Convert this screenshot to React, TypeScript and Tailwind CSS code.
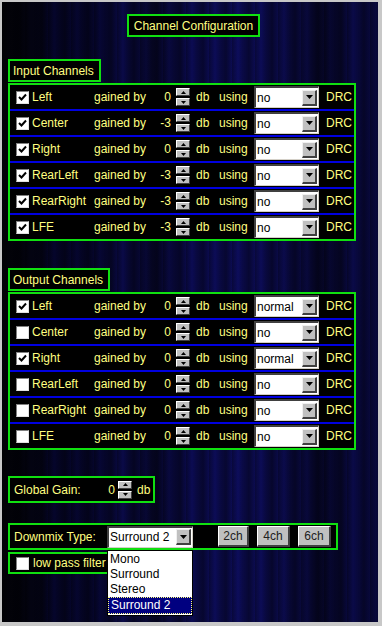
import React from 'react'

type Row = { name: string; on: boolean; gain: string; mode: string }

const INPUTS: Row[] = [
  { name: 'Left', on: true, gain: '0', mode: 'no' },
  { name: 'Center', on: true, gain: '-3', mode: 'no' },
  { name: 'Right', on: true, gain: '0', mode: 'no' },
  { name: 'RearLeft', on: true, gain: '-3', mode: 'no' },
  { name: 'RearRight', on: true, gain: '-3', mode: 'no' },
  { name: 'LFE', on: true, gain: '-3', mode: 'no' },
]

const OUTPUTS: Row[] = [
  { name: 'Left', on: true, gain: '0', mode: 'normal' },
  { name: 'Center', on: false, gain: '0', mode: 'no' },
  { name: 'Right', on: true, gain: '0', mode: 'normal' },
  { name: 'RearLeft', on: false, gain: '0', mode: 'no' },
  { name: 'RearRight', on: false, gain: '0', mode: 'no' },
  { name: 'LFE', on: false, gain: '0', mode: 'no' },
]

function Check({ on }: { on: boolean }) {
  return (
    <div className="w-[13px] h-[13px] bg-white border-t border-l border-[#808080] border-r border-b border-r-[#e0e0e0] border-b-[#e0e0e0] flex items-center justify-center shrink-0">
      {on && (
        <svg width="9" height="9" viewBox="0 0 9 9">
          <path d="M1 4 L3.5 6.5 L8 1.5" fill="none" stroke="#000" strokeWidth="2" />
        </svg>
      )}
    </div>
  )
}

function Arrow() {
  return (
    <svg width="7" height="4" viewBox="0 0 7 4">
      <path d="M0 0 L7 0 L3.5 4 Z" fill="#000" />
    </svg>
  )
}

function SpinBtn({ up }: { up?: boolean }) {
  return (
    <div className="w-[14px] h-[8px] bg-[#c0c0c0] border-t border-l border-white border-r border-b border-r-[#404040] border-b-[#404040] flex items-center justify-center">
      <svg width="5" height="3" viewBox="0 0 5 3">
        <path d={up ? 'M0 3 L2.5 0 L5 3 Z' : 'M0 0 L5 0 L2.5 3 Z'} fill="#000" />
      </svg>
    </div>
  )
}

function Spinner() {
  return (
    <div className="flex flex-col gap-[2px] shrink-0">
      <SpinBtn up />
      <SpinBtn />
    </div>
  )
}

function Select({ value, width }: { value: string; width: string }) {
  return (
    <div className={`${width} h-[22px] bg-white border-t-2 border-l-2 border-[#404040] border-r border-b border-r-[#d4d0c8] border-b-[#d4d0c8] flex items-center justify-between shrink-0`}>
      <span className="pl-[1px] text-black text-[12px] leading-none whitespace-nowrap">{value}</span>
      <div className="w-[15px] h-[16px] mr-[1px] bg-[#c0c0c0] border-t border-l border-[#f0f0f0] border-r-2 border-b-2 border-r-[#404040] border-b-[#404040] flex items-center justify-center shrink-0">
        <Arrow />
      </div>
    </div>
  )
}

function ChannelTable({ rows }: { rows: Row[] }) {
  return (
    <div className="w-[348px] border-2 border-[#10e010] bg-black divide-y-2 divide-[#0000e0] mt-[1px]">
      {rows.map(r => (
        <div key={r.name} className="box-content h-[24px] flex items-center text-[12px] text-[#ffff80] whitespace-nowrap">
          <div className="ml-[6px]"><Check on={r.on} /></div>
          <span className="ml-[3px] w-[62px] shrink-0">{r.name}</span>
          <span className="w-[52px] shrink-0">gained by</span>
          <span className="w-[25px] shrink-0 text-right">{r.gain}</span>
          <div className="ml-[5px]"><Spinner /></div>
          <span className="ml-[6px] w-[23px] shrink-0">db</span>
          <span className="w-[35px] shrink-0">using</span>
          <Select value={r.mode} width="w-[65px]" />
          <span className="ml-[7px]">DRC</span>
        </div>
      ))}
    </div>
  )
}

function Label({ text, width }: { text: string; width: string }) {
  return (
    <div className={`${width} h-[23px] border-2 border-[#10e010] bg-black flex items-center pl-[3px] text-[12px] text-[#ffff80] whitespace-nowrap`}>
      {text}
    </div>
  )
}

function GrayBtn({ text, width }: { text: string; width: string }) {
  return (
    <div className={`${width} h-[21px] bg-[#c0c0c0] border-t border-l border-white border-r-2 border-b-2 border-r-[#404040] border-b-[#404040] flex items-center justify-center text-[12px] text-[#202020]`}>
      {text}
    </div>
  )
}

export default function App() {
  return (
    <div
      className="relative w-[382px] h-[626px] overflow-hidden border-t-2 border-l-2 border-r-4 border-b-4 border-[#c8c8c8] bg-[repeating-linear-gradient(90deg,rgba(0,0,0,0.35)_0px,rgba(0,0,0,0)_6px,rgba(0,0,0,0.25)_11px,rgba(0,0,0,0.45)_17px,rgba(0,0,0,0.1)_23px),linear-gradient(90deg,#020206_0%,#030312_8%,#05052c_14%,#060630_25%,#0a0a48_32%,#07072e_40%,#0b0b52_50%,#0d0d5c_65%,#0a0a46_78%,#06062a_86%,#0b0b4e_95%,#080838_100%)] pl-[6px] pt-[12px] flex flex-col items-start"
      style={{ fontFamily: '"Liberation Sans", Arial, sans-serif' }}
    >
      <div className="ml-[119px] w-[133px] h-[23px] border-2 border-[#10e010] bg-black flex items-center justify-center text-[12px] text-[#ffff80] whitespace-nowrap">
        Channel Configuration
      </div>

      <div className="mt-[22px]"><Label text="Input Channels" width="w-[93px]" /></div>
      <ChannelTable rows={INPUTS} />

      <div className="mt-[27px]"><Label text="Output Channels" width="w-[102px]" /></div>
      <ChannelTable rows={OUTPUTS} />

      <div className="mt-[26px] w-[147px] h-[27px] border-2 border-[#10e010] bg-black flex items-center text-[12px] text-[#ffff80] whitespace-nowrap">
        <span className="ml-[4px] w-[93px] shrink-0">Global Gain:</span>
        <span className="w-[8px] shrink-0 text-right">0</span>
        <div className="ml-[3px]"><Spinner /></div>
        <span className="ml-[5px]">db</span>
      </div>

      <div className="mt-[20px] w-[330px] h-[27px] border-2 border-[#10e010] bg-black flex items-center text-[12px] text-[#ffff80] whitespace-nowrap">
        <span className="ml-[4px] w-[93px] shrink-0">Downmix Type:</span>
        <Select value="Surround 2" width="w-[86px]" />
        <div className="ml-[25px] flex gap-[8px]">
          <GrayBtn text="2ch" width="w-[31px]" />
          <GrayBtn text="4ch" width="w-[33px]" />
          <GrayBtn text="6ch" width="w-[33px]" />
        </div>
      </div>

      <div className="mt-[2px] w-[130px] h-[22px] border-2 border-[#10e010] bg-black flex items-center text-[12px] text-[#ffff80] whitespace-nowrap">
        <div className="ml-[6px]"><Check on={false} /></div>
        <span className="ml-[4px]">low pass filter</span>
      </div>

      <div className="absolute left-[105px] top-[548px] w-[86px] bg-white border border-black text-[12px] text-black leading-[15px] py-[1px]">
        <div className="pl-[2px]">Mono</div>
        <div className="pl-[2px]">Surround</div>
        <div className="pl-[2px]">Stereo</div>
        <div className="pl-[2px] bg-[#000080] text-white border border-dotted border-[#ffff80]">Surround 2</div>
      </div>
    </div>
  )
}
